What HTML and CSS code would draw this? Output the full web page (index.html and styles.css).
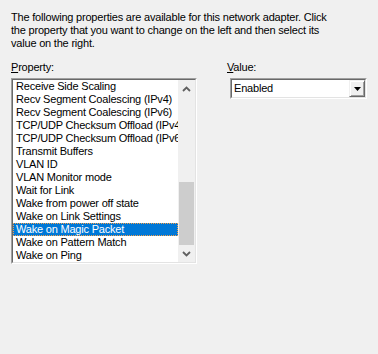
FILE: index.html
```html
<!DOCTYPE html>
<html>
<head>
<meta charset="utf-8">
<link rel="stylesheet" href="styles.css">
</head>
<body>
<div class="page">
  <p class="desc">The following properties are available for this network adapter. Click the property that you want to change on the left and then select its value on the right.</p>
  <div class="cols">
    <div class="col-left">
      <div class="label"><u>P</u>roperty:</div>
      <div class="listbox">
        <div class="listbox-inner">
          <ul class="items">
            <li>Receive Side Scaling</li>
            <li>Recv Segment Coalescing (IPv4)</li>
            <li>Recv Segment Coalescing (IPv6)</li>
            <li>TCP/UDP Checksum Offload (IPv4)</li>
            <li>TCP/UDP Checksum Offload (IPv6)</li>
            <li>Transmit Buffers</li>
            <li>VLAN ID</li>
            <li>VLAN Monitor mode</li>
            <li>Wait for Link</li>
            <li>Wake from power off state</li>
            <li>Wake on Link Settings</li>
            <li class="selected">Wake on Magic Packet</li>
            <li>Wake on Pattern Match</li>
            <li>Wake on Ping</li>
          </ul>
          <div class="scrollbar">
            <div class="sb-btn">
              <svg width="9" height="6" viewBox="0 0 9 6"><path d="M1 5 L4.5 1.5 L8 5" fill="none" stroke="#606060" stroke-width="1.8"/></svg>
            </div>
            <div class="sb-track"><div class="sb-thumb"></div></div>
            <div class="sb-btn">
              <svg width="9" height="6" viewBox="0 0 9 6"><path d="M1 1 L4.5 4.5 L8 1" fill="none" stroke="#606060" stroke-width="1.8"/></svg>
            </div>
          </div>
        </div>
      </div>
    </div>
    <div class="col-right">
      <div class="label"><u>V</u>alue:</div>
      <div class="combo">
        <div class="combo-inner">
          <span class="combo-text">Enabled</span>
          <div class="combo-btn">
            <svg width="7" height="4" viewBox="0 0 7 4"><path d="M0 0 H7 L3.5 4 Z" fill="#000"/></svg>
          </div>
        </div>
      </div>
    </div>
  </div>
</div>
</body>
</html>
```
FILE: styles.css
```css
html, body {
  margin: 0;
  padding: 0;
  background: #f0f0f0;
}
body {
  font-family: "Liberation Sans", Arial, sans-serif;
  font-size: 11px;
  line-height: 13px;
  letter-spacing: -0.2px;
  color: #000;
  width: 378px;
  height: 354px;
  overflow: hidden;
}
.page {
  padding: 11px 0 0 11px;
}
.desc {
  margin: 0;
  width: 330px;
}
.cols {
  display: flex;
  margin-top: 11px;
}
.col-left {
  width: 186px;
}
.col-right {
  margin-left: 30px;
  width: 143px;
}
.label {
  height: 13px;
  margin-bottom: 4px;
}
.label u {
  text-decoration: underline;
  text-underline-offset: 1px;
}
.listbox {
  border: 1px solid;
  border-color: #a0a0a0 #ffffff #ffffff #a0a0a0;
  box-sizing: border-box;
  width: 186px;
}
.listbox-inner {
  border: 1px solid;
  border-color: #696969 #e3e3e3 #e3e3e3 #696969;
  background: #fff;
  display: flex;
  height: 182px;
}
.items {
  list-style: none;
  margin: 0;
  padding: 0;
  flex: 1;
  overflow: hidden;
}
.items li {
  height: 13px;
  line-height: 13px;
  padding-left: 3px;
  white-space: nowrap;
  overflow: hidden;
  box-sizing: border-box;
}
.items li.selected {
  background: #0078d7;
  color: #fff;
  outline: 1px dotted #f5a04a;
  outline-offset: -1px;
}
.scrollbar {
  width: 17px;
  background: #f0f0f0;
  display: flex;
  flex-direction: column;
}
.sb-btn {
  height: 17px;
  display: flex;
  align-items: center;
  justify-content: center;
}
.sb-track {
  flex: 1;
  display: flex;
  flex-direction: column;
  justify-content: flex-end;
  padding: 0 1px;
}
.sb-thumb {
  height: 63px;
  background: #cdcdcd;
}
.combo {
  margin-left: 3px;
  width: 137px;
  box-sizing: border-box;
  border: 1px solid;
  border-color: #a0a0a0 #ffffff #ffffff #a0a0a0;
}
.combo-inner {
  border: 1px solid;
  border-color: #696969 #e3e3e3 #e3e3e3 #696969;
  background: #fff;
  height: 17px;
  display: flex;
  align-items: center;
}
.combo-text {
  flex: 1;
  padding-left: 2px;
  line-height: 13px;
}
.combo-btn {
  width: 16px;
  height: 17px;
  box-sizing: border-box;
  background: #f0f0f0;
  border: 1px solid;
  border-color: #f0f0f0 #696969 #696969 #f0f0f0;
  box-shadow: inset 1px 1px 0 #ffffff, inset -1px -1px 0 #a0a0a0;
  display: flex;
  align-items: center;
  justify-content: center;
}
```
